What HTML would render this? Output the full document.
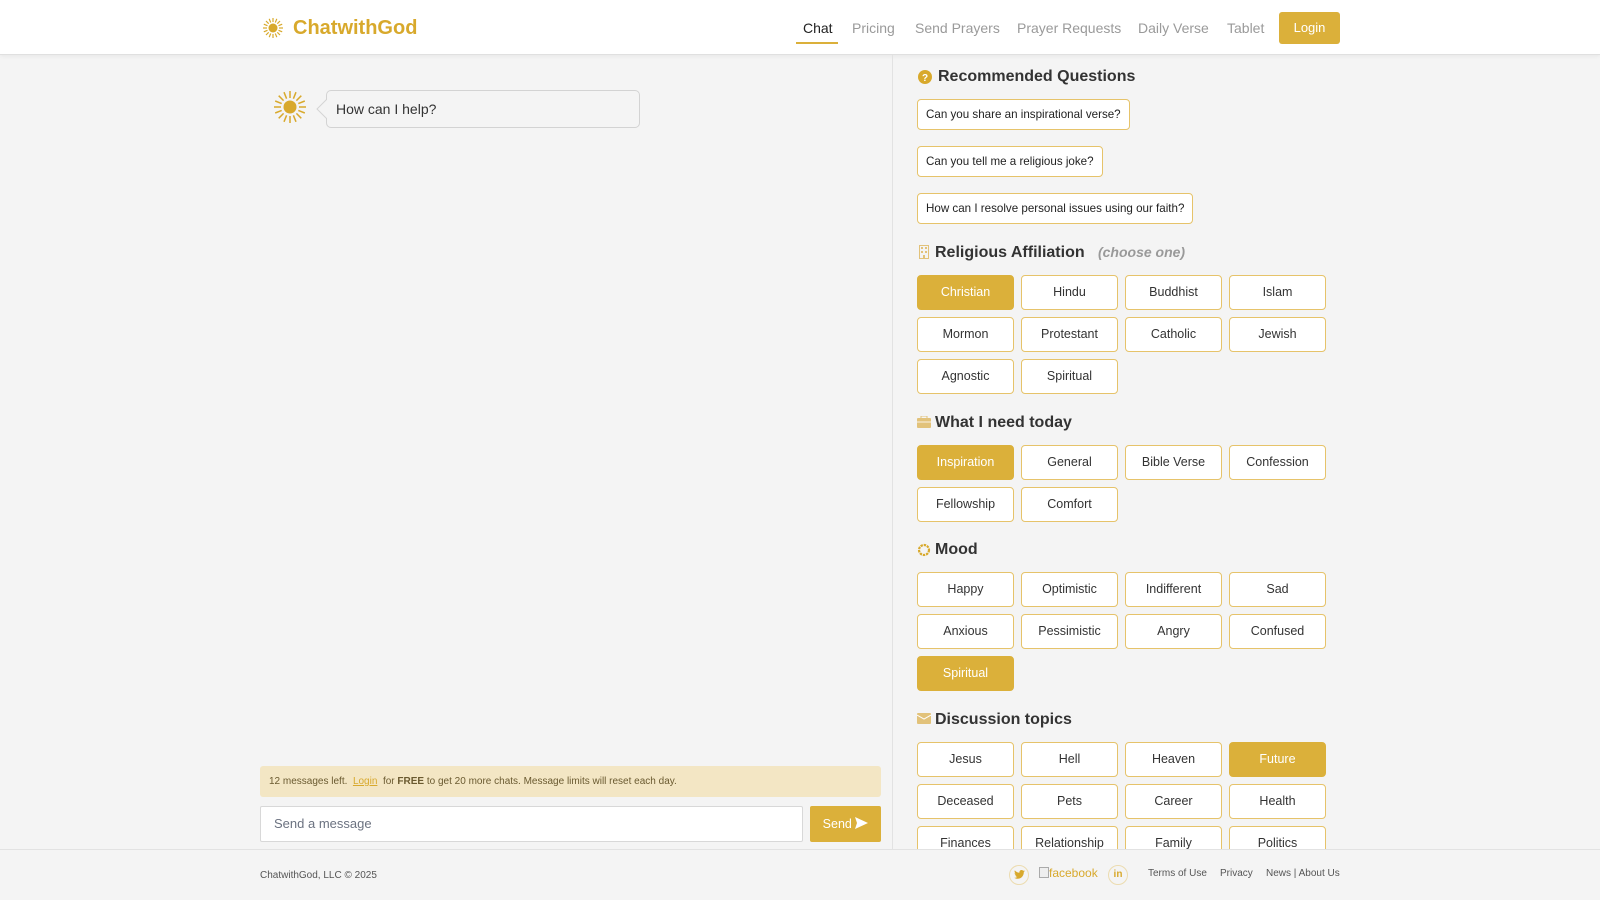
<!DOCTYPE html>
<html><head><meta charset="utf-8"><style>
*{box-sizing:border-box;margin:0;padding:0}
body{width:1600px;height:900px;overflow:hidden;background:#f4f4f4;font-family:"Liberation Sans",Arial,sans-serif;position:relative;color:#333}
.abs{position:absolute}
header{position:absolute;left:0;top:0;width:1600px;height:55px;background:#fff;border-bottom:1px solid #e0e0e0;box-shadow:0 1px 4px rgba(0,0,0,.06)}
.logo{left:293px;top:17px;font-size:20px;font-weight:bold;color:#d8a92c}
.nav{top:20px;font-size:14px;color:#9a9a9a}
.login{left:1279px;top:12px;width:61px;height:32px;background:#dbb03a;border-radius:3px;color:#fff;font-size:13px;text-align:center;line-height:32px}
.bubble{left:326px;top:90px;width:314px;height:38px;border:1px solid #d3d3d3;border-radius:5px;background:#f4f4f4;font-size:14px;line-height:36px;padding-left:9px;color:#333}
.notice{left:260px;top:766px;width:621px;height:31px;background:#f3e6c4;border-radius:3px;font-size:10px;line-height:31px;padding-left:9px;color:#6a5a30}
.input{left:260px;top:806px;width:543px;height:36px;background:#fff;border:1px solid #d8d8d8;border-radius:2px;font-size:13px;line-height:34px;padding-left:13px;color:#6b7280}
.send{left:810px;top:806px;width:71px;height:36px;background:#dbb03a;border-radius:2px;color:#fff;font-size:12.5px;line-height:36px;text-align:center}
.divider{left:892px;top:55px;width:1px;height:794px;background:#e2e2e2}
.h{font-size:16px;font-weight:bold;color:#333;left:935px}
.q{left:917px;height:31px;border:1px solid #e6c36a;border-radius:4px;background:#fff;font-size:11.6px;line-height:29px;padding:0 8px;color:#222}
.b{width:97px;height:35px;border:1px solid #e6c36a;border-radius:4px;background:#fff;font-size:12.5px;line-height:33px;text-align:center;color:#333}
.b.on{background:#dbb03a;border-color:#dbb03a;color:#fff}
footer{position:absolute;left:0;top:849px;width:1600px;height:51px;background:#f4f4f4;border-top:1px solid #e2e2e2}
.ft{font-size:10px;color:#555;top:869px}
.circ{width:20px;height:20px;border:1px solid #ecdcb0;border-radius:50%;top:865px;text-align:center;color:#d8a92c;font-size:10px;line-height:18px;font-weight:bold}
</style></head><body>
<header></header>
<svg class="abs" style="left:262px;top:17px" width="22" height="22" viewBox="-11 -11 22 22"><g stroke="#d8a92c" stroke-width="1.2"><line x1="0" y1="-10" x2="0" y2="-6"/><line x1="0" y1="10" x2="0" y2="6"/><line x1="-10" y1="0" x2="-6" y2="0"/><line x1="10" y1="0" x2="6" y2="0"/><line x1="-7" y1="-7" x2="-4.3" y2="-4.3"/><line x1="7" y1="7" x2="4.3" y2="4.3"/><line x1="-7" y1="7" x2="-4.3" y2="4.3"/><line x1="7" y1="-7" x2="4.3" y2="-4.3"/><line x1="-3.8" y1="-9.2" x2="-2.3" y2="-5.5"/><line x1="3.8" y1="9.2" x2="2.3" y2="5.5"/><line x1="-9.2" y1="3.8" x2="-5.5" y2="2.3"/><line x1="9.2" y1="-3.8" x2="5.5" y2="-2.3"/><line x1="3.8" y1="-9.2" x2="2.3" y2="-5.5"/><line x1="-3.8" y1="9.2" x2="-2.3" y2="5.5"/><line x1="-9.2" y1="-3.8" x2="-5.5" y2="-2.3"/><line x1="9.2" y1="3.8" x2="5.5" y2="2.3"/></g><circle r="4.5" fill="#d8a92c"/></svg>
<div class="abs logo">ChatwithGod</div>
<div class="abs nav" style="left:803px;color:#222">Chat</div>
<div class="abs" style="left:796px;top:42px;width:42px;height:2px;background:#dbb03a"></div>
<div class="abs nav" style="left:852px">Pricing</div>
<div class="abs nav" style="left:915px">Send Prayers</div>
<div class="abs nav" style="left:1017px">Prayer Requests</div>
<div class="abs nav" style="left:1138px">Daily Verse</div>
<div class="abs nav" style="left:1227px">Tablet</div>
<div class="abs login">Login</div>

<svg class="abs" style="left:273px;top:90px" width="34" height="34" viewBox="-17 -17 34 34"><g stroke="#d8a92c" stroke-width="1.5"><line x1="0" y1="-16" x2="0" y2="-9"/><line x1="0" y1="16" x2="0" y2="9"/><line x1="-16" y1="0" x2="-9" y2="0"/><line x1="16" y1="0" x2="9" y2="0"/><line x1="-11.3" y1="-11.3" x2="-6.4" y2="-6.4"/><line x1="11.3" y1="11.3" x2="6.4" y2="6.4"/><line x1="-11.3" y1="11.3" x2="-6.4" y2="6.4"/><line x1="11.3" y1="-11.3" x2="6.4" y2="-6.4"/><line x1="-6" y1="-14.8" x2="-3.4" y2="-8.3"/><line x1="6" y1="14.8" x2="3.4" y2="8.3"/><line x1="-14.8" y1="6" x2="-8.3" y2="3.4"/><line x1="14.8" y1="-6" x2="8.3" y2="-3.4"/><line x1="6" y1="-14.8" x2="3.4" y2="-8.3"/><line x1="-6" y1="14.8" x2="-3.4" y2="8.3"/><line x1="-14.8" y1="-6" x2="-8.3" y2="-3.4"/><line x1="14.8" y1="6" x2="8.3" y2="3.4"/></g><circle r="6.5" fill="#d8a92c"/></svg>
<div class="abs bubble">How can I help?</div>
<svg class="abs" style="left:316px;top:99px" width="11" height="20"><path d="M11 0 L1 10 L11 20" fill="#f4f4f4" stroke="#d3d3d3"/></svg>

<div class="abs notice">12 messages left. &nbsp;<span style="color:#d8a92c;text-decoration:underline">Login</span>&nbsp; for <b>FREE</b> to get 20 more chats. Message limits will reset each day.</div>
<div class="abs input">Send a message</div>
<div class="abs send">Send <svg width="13" height="12" viewBox="0 0 13 12" style="vertical-align:-1px"><path d="M0 0 L13 6 L0 12 L2 6Z" fill="#fff"/></svg></div>
<div class="abs divider"></div>

<svg class="abs" style="left:918px;top:70px" width="14" height="14"><circle cx="7" cy="7" r="7" fill="#d8a92c"/><text x="7" y="11" font-size="10" font-weight="bold" fill="#fff" text-anchor="middle" font-family="Liberation Sans">?</text></svg>
<div class="abs h" style="top:68px;left:938px">Recommended Questions</div>
<div class="abs q" style="top:99px">Can you share an inspirational verse?</div>
<div class="abs q" style="top:146px">Can you tell me a religious joke?</div>
<div class="abs q" style="top:193px">How can I resolve personal issues using our faith?</div>

<svg class="abs" style="left:919px;top:245px" width="10" height="14"><rect x=".5" y=".5" width="9" height="13" fill="none" stroke="#e2c27a"/><g fill="#e2c27a"><rect x="2" y="2" width="2" height="2"/><rect x="6" y="2" width="2" height="2"/><rect x="2" y="6" width="2" height="2"/><rect x="6" y="6" width="2" height="2"/><rect x="4" y="10" width="2" height="4"/></g></svg>
<div class="abs h" style="top:244px">Religious Affiliation &nbsp;&nbsp;<i style="color:#999;font-size:14px">(choose one)</i></div>

<div class="abs" style="left:917px;top:275px;width:420px">
<div style="display:grid;grid-template-columns:repeat(4,97px);column-gap:7px;row-gap:7px">
<div class="b on">Christian</div><div class="b">Hindu</div><div class="b">Buddhist</div><div class="b">Islam</div>
<div class="b">Mormon</div><div class="b">Protestant</div><div class="b">Catholic</div><div class="b">Jewish</div>
<div class="b">Agnostic</div><div class="b">Spiritual</div></div></div>

<svg class="abs" style="left:917px;top:416px" width="14" height="12"><rect x="0" y="2" width="14" height="10" rx="1" fill="#e2c27a"/><rect x="4" y="0" width="6" height="3" fill="none" stroke="#e2c27a"/><line x1="0" y1="6" x2="14" y2="6" stroke="#fff" stroke-width=".8"/></svg>
<div class="abs h" style="top:414px">What I need today</div>
<div class="abs" style="left:917px;top:445px;width:420px">
<div style="display:grid;grid-template-columns:repeat(4,97px);column-gap:7px;row-gap:7px">
<div class="b on">Inspiration</div><div class="b">General</div><div class="b">Bible Verse</div><div class="b">Confession</div>
<div class="b">Fellowship</div><div class="b">Comfort</div></div></div>

<svg class="abs" style="left:917px;top:543px" width="14" height="14"><circle cx="7" cy="7" r="5" fill="none" stroke="#d8a92c" stroke-width="2.2" stroke-dasharray="2.4 0.9"/></svg>
<div class="abs h" style="top:541px">Mood</div>
<div class="abs" style="left:917px;top:572px;width:420px">
<div style="display:grid;grid-template-columns:repeat(4,97px);column-gap:7px;row-gap:7px">
<div class="b">Happy</div><div class="b">Optimistic</div><div class="b">Indifferent</div><div class="b">Sad</div>
<div class="b">Anxious</div><div class="b">Pessimistic</div><div class="b">Angry</div><div class="b">Confused</div>
<div class="b on">Spiritual</div></div></div>

<svg class="abs" style="left:917px;top:713px" width="14" height="11"><rect width="14" height="11" rx="1" fill="#e2c27a"/><path d="M0 2 L7 6 L14 2" fill="none" stroke="#fff" stroke-width="1"/></svg>
<div class="abs h" style="top:711px">Discussion topics</div>
<div class="abs" style="left:917px;top:742px;width:420px">
<div style="display:grid;grid-template-columns:repeat(4,97px);column-gap:7px;row-gap:7px">
<div class="b">Jesus</div><div class="b">Hell</div><div class="b">Heaven</div><div class="b on">Future</div>
<div class="b">Deceased</div><div class="b">Pets</div><div class="b">Career</div><div class="b">Health</div>
<div class="b">Finances</div><div class="b">Relationship</div><div class="b">Family</div><div class="b">Politics</div></div></div>

<footer></footer>
<div class="abs ft" style="left:260px;top:870px">ChatwithGod, LLC © 2025</div>
<div class="abs circ" style="left:1009px"><svg width="11" height="9" viewBox="0 0 24 20" style="margin-top:4px"><path d="M24 2.4c-.9.4-1.8.7-2.8.8 1-.6 1.8-1.6 2.2-2.7-1 .6-2 1-3.1 1.2C19.4.7 18.1 0 16.6 0c-2.7 0-4.9 2.2-4.9 4.9 0 .4 0 .8.1 1.1C7.7 5.8 4.1 3.9 1.7.9c-.4.7-.7 1.6-.7 2.5 0 1.7.9 3.2 2.2 4.1-.8 0-1.6-.2-2.2-.6v.1c0 2.4 1.7 4.4 3.9 4.8-.4.1-.8.2-1.3.2-.3 0-.6 0-.9-.1.6 2 2.4 3.4 4.6 3.4-1.7 1.3-3.8 2.1-6.1 2.1-.4 0-.8 0-1.2-.1 2.2 1.4 4.8 2.2 7.5 2.2 9.1 0 14-7.5 14-14v-.6c1-.7 1.8-1.6 2.5-2.5z" fill="#d8a92c"/></svg></div>
<div class="abs" style="left:1039px;top:866px;font-size:12px;color:#d8a92c"><span style="display:inline-block;width:10px;height:11px;border:1px solid #aaa;background:#eee;vertical-align:-1px"></span>facebook</div>
<div class="abs circ" style="left:1108px">in</div>
<div class="abs ft" style="left:1148px;top:868px">Terms of Use</div>
<div class="abs ft" style="left:1220px;top:868px">Privacy</div>
<div class="abs ft" style="left:1266px;top:868px">News | About Us</div>
</body></html>
